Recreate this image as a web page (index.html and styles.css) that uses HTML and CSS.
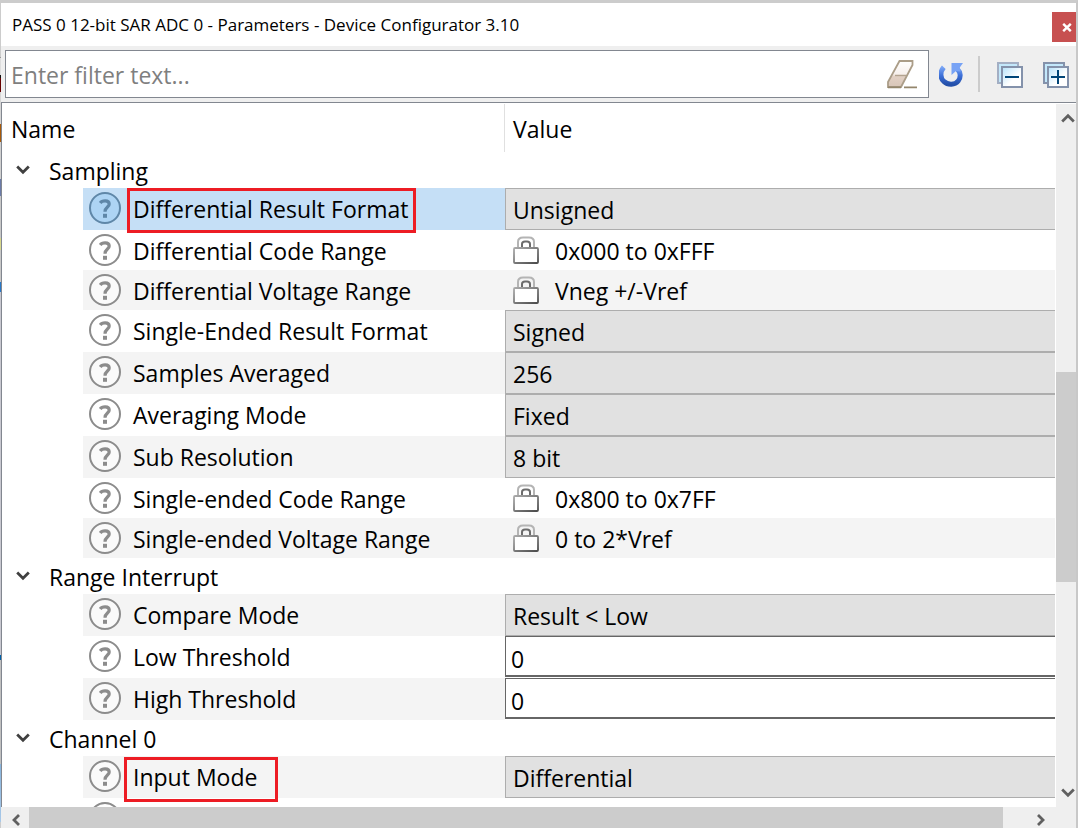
FILE: index.html
```html
<!DOCTYPE html>
<html lang="en">
<head>
<meta charset="utf-8">
<title>Device Configurator</title>
<link rel="stylesheet" href="styles.css">
</head>
<body>
<svg class="defs" aria-hidden="true">
  <symbol id="help" viewBox="0 0 34 34">
    <circle cx="17" cy="17" r="15" fill="var(--help-fill)" stroke="currentColor" stroke-width="2"/>
    <path d="M12.2 12C14 9.4 21 8.8 21.2 13C21.4 16.2 17 16 17 20.8" fill="none" stroke="currentColor" stroke-width="3.2"/>
    <path d="M15 22.8h4v4h-4z" fill="currentColor"/>
  </symbol>
  <symbol id="lock" viewBox="0 0 26 28">
    <path d="M5 12V6Q5 1.5 10 1.5H16Q21 1.5 21 6V12" fill="none" stroke="#b4b4b4" stroke-width="2"/>
    <path d="M9 11V8Q9 5.5 12 5.5H14Q17 5.5 17 8V11" fill="none" stroke="#6c6c6c" stroke-width="2"/>
    <rect x="1" y="12" width="24" height="15" rx="1" fill="#fff" stroke="url(#metal)" stroke-width="1.8"/>
  </symbol>
  <symbol id="down" viewBox="0 0 14 10">
    <path d="M1.2 1.6L7 7.2L12.8 1.6" fill="none" stroke="currentColor" stroke-width="2.8"/>
  </symbol>
  <defs>
    <linearGradient id="metal" x1="0" y1="0" x2="1" y2="1"><stop offset="0" stop-color="#aaa"/><stop offset="1" stop-color="#4c4c4c"/></linearGradient>
    <linearGradient id="blue" x1="0" y1="0" x2="0" y2="1"><stop offset="0" stop-color="#79a5f5"/><stop offset=".5" stop-color="#3d70d8"/><stop offset="1" stop-color="#2450aa"/></linearGradient>
    <linearGradient id="pane" x1="0" y1="0" x2="1" y2="1"><stop offset="0" stop-color="#b5e2fb"/><stop offset=".6" stop-color="#fff"/></linearGradient>
    <linearGradient id="rubber" x1="0" y1="0" x2="0" y2="1"><stop offset="0" stop-color="#fff"/><stop offset=".5" stop-color="#f7f0ec"/><stop offset=".6" stop-color="#e2d0c4"/><stop offset="1" stop-color="#d8c6b8"/></linearGradient>
  </defs>
</svg>
<div class="window">
  <header class="titlebar">
    <h1>PASS 0 12-bit SAR ADC 0 - Parameters - Device Configurator 3.10</h1>
    <button class="close" aria-label="Close"><svg width="10" height="9" viewBox="0 0 10 9"><path d="M1.2 .8L8.8 8.2M8.8 .8L1.2 8.2" stroke="#fff" stroke-width="2.4"/></svg></button>
  </header>
  <div class="toolbar">
    <div class="filter">
      <input type="text" placeholder="Enter filter text..." aria-label="Filter">
      <button class="icon" aria-label="Clear filter"><svg width="30" height="29" viewBox="0 0 30 29"><path d="M12.5 1H25.5V5L14 27H1V22Z" fill="url(#rubber)" stroke="#ab9d88" stroke-width="1.8"/><path d="M8 15.5H19" stroke="#b3a38f" stroke-width="1.4"/><path d="M1 27.3H14M17 27.3H30" stroke="#94866c" stroke-width="1.8"/></svg></button>
    </div>
    <button class="icon refresh" aria-label="Reset"><svg width="24" height="24" viewBox="0 0 24 24"><path d="M4.8 4.2C.4 9 1.6 15.6 4.8 18.4C9 22.4 16 22 19.2 18C22 14.4 21.8 9.4 18.6 6.4" fill="none" stroke="url(#blue)" stroke-width="5"/><path d="M12.5 0H24L20.8 4.4L21.5 8.4L17 8L12.5 12Z" fill="#78a3f5"/></svg></button>
    <span class="divider"></span>
    <button class="icon collapse" aria-label="Collapse all"><svg width="26" height="26" viewBox="0 0 26 26"><path d="M1 1H21V21H1Z" fill="#c3e8fb" stroke="#a3afc4" stroke-width="2"/><path d="M5 5H25V25H5Z" fill="url(#pane)" stroke="#8492ab" stroke-width="2"/><path d="M8 15H22" stroke="#004578" stroke-width="2"/></svg></button>
    <button class="icon" aria-label="Expand all"><svg width="26" height="26" viewBox="0 0 26 26"><path d="M1 1H21V21H1Z" fill="#c3e8fb" stroke="#8492ab" stroke-width="2"/><path d="M5 5H25V25H5Z" fill="url(#pane)" stroke="#8492ab" stroke-width="2"/><path d="M8 15H22M15 8V22" stroke="#004578" stroke-width="2"/></svg></button>
  </div>
  <main class="body">
    <div class="view">
      <table>
        <thead><tr><th class="namecol" scope="col">Name</th><th class="valuecol" scope="col">Value</th></tr></thead>
        <tbody>
          <tr class="group"><th colspan="2" scope="colgroup"><button><svg width="14" height="10"><use href="#down"/></svg>Sampling</button></th></tr>
          <tr class="tall selected"><td><div class="name"><svg class="help"><use href="#help"/></svg><label for="drf">Differential Result Format</label><span class="mark mark-format"></span></div></td><td><select id="drf"><option>Unsigned</option></select></td></tr>
          <tr><td><div class="name"><svg class="help"><use href="#help"/></svg><span>Differential Code Range</span></div></td><td><div class="locked"><svg class="lock"><use href="#lock"/></svg>0x000 to 0xFFF</div></td></tr>
          <tr class="alt"><td><div class="name"><svg class="help"><use href="#help"/></svg><span>Differential Voltage Range</span></div></td><td><div class="locked"><svg class="lock"><use href="#lock"/></svg>Vneg +/-Vref</div></td></tr>
          <tr class="tall"><td><div class="name"><svg class="help"><use href="#help"/></svg><label for="srf">Single-Ended Result Format</label></div></td><td><select id="srf"><option>Signed</option></select></td></tr>
          <tr class="tall alt"><td><div class="name"><svg class="help"><use href="#help"/></svg><label for="avg">Samples Averaged</label></div></td><td><select id="avg"><option>256</option></select></td></tr>
          <tr class="tall"><td><div class="name"><svg class="help"><use href="#help"/></svg><label for="mode">Averaging Mode</label></div></td><td><select id="mode"><option>Fixed</option></select></td></tr>
          <tr class="tall alt"><td><div class="name"><svg class="help"><use href="#help"/></svg><label for="res">Sub Resolution</label></div></td><td><select id="res"><option>8 bit</option></select></td></tr>
          <tr><td><div class="name"><svg class="help"><use href="#help"/></svg><span>Single-ended Code Range</span></div></td><td><div class="locked"><svg class="lock"><use href="#lock"/></svg>0x800 to 0x7FF</div></td></tr>
          <tr class="alt"><td><div class="name"><svg class="help"><use href="#help"/></svg><span>Single-ended Voltage Range</span></div></td><td><div class="locked"><svg class="lock"><use href="#lock"/></svg>0 to 2*Vref</div></td></tr>
          <tr class="group"><th colspan="2" scope="colgroup"><button><svg width="14" height="10"><use href="#down"/></svg>Range Interrupt</button></th></tr>
          <tr class="tall alt"><td><div class="name"><svg class="help"><use href="#help"/></svg><label for="cmp">Compare Mode</label></div></td><td><select id="cmp"><option>Result &lt; Low</option></select></td></tr>
          <tr class="tall"><td><div class="name"><svg class="help"><use href="#help"/></svg><label for="low">Low Threshold</label></div></td><td><input id="low" type="text" value="0"></td></tr>
          <tr class="tall alt"><td><div class="name"><svg class="help"><use href="#help"/></svg><label for="high">High Threshold</label></div></td><td><input id="high" type="text" value="0"></td></tr>
          <tr class="group"><th colspan="2" scope="colgroup"><button><svg width="14" height="10"><use href="#down"/></svg>Channel 0</button></th></tr>
          <tr class="tall alt"><td><div class="name"><svg class="help"><use href="#help"/></svg><label for="input">Input Mode</label><span class="mark mark-input"></span></div></td><td><select id="input"><option>Differential</option></select></td></tr>
          <tr class="tall"><td><div class="name"><svg class="help"><use href="#help"/></svg></div></td><td></td></tr>
        </tbody>
      </table>
    </div>
    <div class="vbar">
      <button aria-label="Scroll up"><svg class="flip" width="14" height="10"><use href="#down"/></svg></button>
      <div class="vtrack"><div class="vthumb"></div></div>
      <button aria-label="Scroll down"><svg width="14" height="10"><use href="#down"/></svg></button>
    </div>
  </main>
  <div class="hbar">
    <button aria-label="Scroll left"><svg width="10" height="12" viewBox="0 0 10 12"><path d="M8 1L3 6L8 11" fill="none" stroke="currentColor" stroke-width="2.8"/></svg></button>
    <div class="htrack"><div class="hthumb"></div></div>
    <button class="right" aria-label="Scroll right"><svg width="10" height="12" viewBox="0 0 10 12"><path d="M2 1L7 6L2 11" fill="none" stroke="currentColor" stroke-width="2.8"/></svg></button>
  </div>
</div>
</body>
</html>
```
FILE: styles.css
```css
* { box-sizing: border-box; }

body {
  margin: 0;
  font-family: "Open Sans", "Noto Sans", sans-serif;
  font-size: 23px;
  line-height: 32px;
  color: #000;
  --help-fill: #fff;
  background: linear-gradient(#ccc 57px, #999 57px, #999 58px, #ddd 58px, #ddd 75px, #111 75px, #111 78px, #600 78px, #600 92px, #d5d5d5 92px, #d5d5d5 124px, #a85a08 124px, #a85a08 142px, #d0d0d0 142px, #d0d0d0 179px, #6b7ba8 179px, #6b7ba8 196px, #c8c8c8 196px, #c8c8c8 238px, #d8d88c 238px, #d8d88c 250px, #c8c8c8 250px, #c8c8c8 282px, #2878c8 282px, #2878c8 292px, #c8c8d0 292px, #c8c8d0 655px, #0060a8 655px, #0060a8 660px, #c0c0c0 660px, #c0c0c0 764px, #88b4dc 764px, #a8c8e8 822px, #ccc 822px);
}

button, input, select { font: inherit; color: inherit; border-radius: 0; margin: 0; }
button { border: 0; padding: 0; background: none; }
svg { display: block; flex: none; }
.defs { position: absolute; width: 0; height: 0; }

.window {
  height: 100vh;
  min-height: 300px;
  margin-left: 1px;
  display: flex;
  flex-direction: column;
  border-top: 3px solid #ccc;
  border-right: 2px solid #c8c8c8;
  background: #efefef;
  overflow: hidden;
}

.titlebar {
  flex: none;
  height: 43px;
  padding-left: 11px;
  display: flex;
  align-items: center;
  justify-content: space-between;
  background: #fff;
}
.titlebar h1 { margin: 0; font-size: 17px; font-weight: 400; line-height: 24px; white-space: nowrap; }
.close {
  width: 24px;
  height: 30px;
  padding-left: 6px;
  margin-top: 5px;
  display: flex;
  align-items: center;
  justify-content: center;
  background: #c75050;
}

.toolbar { flex: none; height: 56px; padding: 4px 7px 4px 4px; display: flex; align-items: center; }
.icon { padding-top: 2px; }
.filter {
  flex: 1;
  height: 48px;
  padding: 0 11px 0 5px;
  display: flex;
  align-items: center;
  border: 1px solid #828790;
  background: #fff;
}
.filter .icon { padding-top: 0; }
.filter input { flex: 1; min-width: 0; padding: 2px 0 0; border: 0; outline: 0; background: none; }
.filter input::placeholder { color: #7f7f7f; opacity: 1; }
.refresh { margin-left: 10px; }
.divider { width: 2px; height: 36px; margin: 0 17px 0 15px; background: #ccc; }
.collapse { margin-right: 20px; }

.body {
  flex: 1;
  min-height: 0;
  display: flex;
  border-top: 1px solid #828790;
  border-left: 1px solid #828790;
  background: #fff;
}
.view { flex: 1; min-width: 0; padding: 1px 1px 0 0; overflow: hidden; }

table { width: 100%; table-layout: fixed; border-collapse: separate; border-spacing: 0; }
th { font-weight: 400; text-align: left; padding: 0; }
td { padding: 0; height: 40px; }
.tall td { height: 42px; }
thead th { height: 48px; padding: 2px 0 0 9px; }
thead .namecol { width: 503px; border-right: 1px solid #e0e0e0; }
thead .valuecol { padding-left: 8px; }
.group th { height: 36px; }
.group button { display: flex; align-items: center; gap: 19px; height: 36px; padding: 2px 0 0 14px; }
.group svg { color: #404040; margin-bottom: 2px; }

.name {
  position: relative;
  height: 40px;
  margin-left: 81px;
  padding-left: 5px;
  display: flex;
  align-items: center;
  gap: 11px;
  white-space: nowrap;
}
.tall .name { height: 42px; }
.name span { padding-top: 2px; }
.help { width: 34px; height: 34px; color: #8c8c8c; }
.tall .help { margin-bottom: 2px; }
.alt .name, .alt .locked { background: #f4f4f4; }
.alt { --help-fill: #fafafa; }
.selected .name { background: #c5dff6; --help-fill: #add4f4; }
.selected .help { color: #5f87a8; }

.locked { height: 40px; padding: 2px 0 0 8px; display: flex; align-items: center; gap: 16px; }
.lock { width: 26px; height: 28px; margin-bottom: 2px; }

select, td input { display: block; width: 100%; outline: 0; }
select {
  appearance: none;
  height: 42px;
  padding: 1px 7px 0;
  border: 1px solid #adadad;
  border-right: 0;
  background: #e1e1e1;
}
td input {
  height: 41px;
  margin-bottom: 1px;
  padding: 5px 5px 0;
  border: 1px solid #666;
  border-bottom-width: 2px;
  border-right: 0;
  background: #fff;
}

/* Red call-outs drawn over the names */
.mark { position: absolute; z-index: 1; border: 3px solid #ed1c24; }
.name .mark { padding: 0; }
.mark-format { inset: 0 89px -3px 44px; }
.mark-input { inset: 1px 227px -4px 41px; }

.vbar { flex: none; width: 20px; margin-top: 1px; display: flex; flex-direction: column; background: #efefef; color: #606060; }
.vbar button { height: 28px; padding-left: 4px; display: flex; align-items: center; justify-content: center; }
.vtrack { flex: 1; display: flex; flex-direction: column; }
.vthumb { height: 210px; margin-top: 240px; margin-right: -2px; background: #ccc; }
.flip { transform: rotate(180deg); }

.hbar { flex: none; height: 21px; margin-left: 2px; display: flex; color: #606060; }
.hbar button { width: 26px; padding-top: 4px; display: flex; align-items: center; justify-content: center; }
.hbar .right { width: 25px; margin-right: 23px; }
.htrack { flex: 1; padding-right: 25px; }
.hthumb { height: 100%; background: #ccc; }
```
